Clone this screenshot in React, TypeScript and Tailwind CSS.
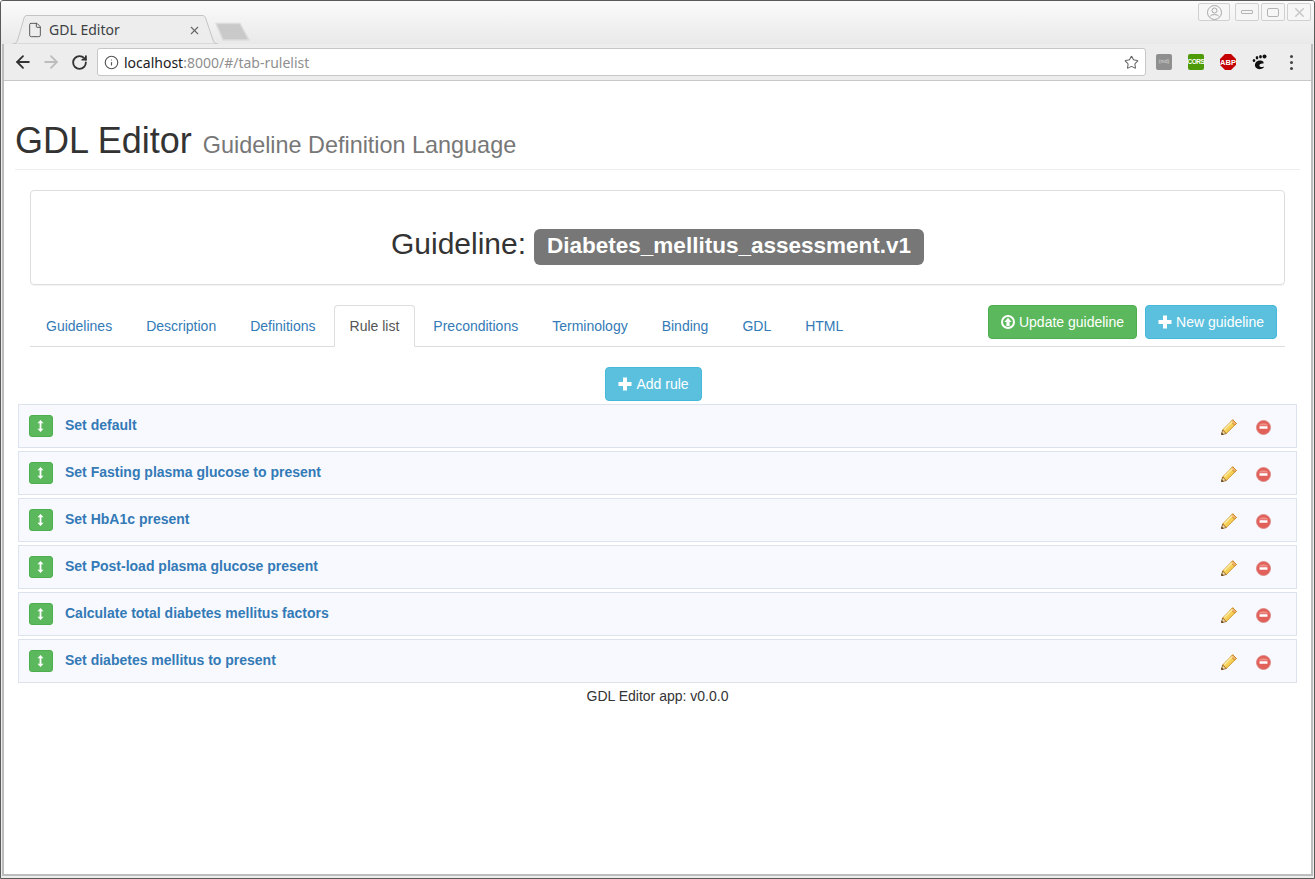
import { ArrowLeft, ArrowRight, RotateCw, Info, Star, File, X } from "lucide-react";

const rules = [
  "Set default",
  "Set Fasting plasma glucose to present",
  "Set HbA1c present",
  "Set Post-load plasma glucose present",
  "Calculate total diabetes mellitus factors",
  "Set diabetes mellitus to present",
];

const tabs = ["Guidelines", "Description", "Definitions", "Rule list", "Preconditions", "Terminology", "Binding", "GDL", "HTML"];

const PlusIcon = () => (
  <svg width="14" height="14" viewBox="0 0 14 14" className="shrink-0">
    <path d="M5 0.5h4v4.5h4.5v4H9v4.5H5V9H0.5V5H5z" fill="#fff" />
  </svg>
);

const UploadIcon = () => (
  <svg width="14" height="14" viewBox="0 0 14 14" className="shrink-0">
    <path
      fillRule="evenodd"
      d="M7 0a7 7 0 1 1 0 14A7 7 0 0 1 7 0zm0 2a5 5 0 1 0 0 10A5 5 0 0 0 7 2zm0 .8L10.6 7H8.6v4H5.4V7H3.4z"
      fill="#fff"
    />
  </svg>
);

const ResizeIcon = () => (
  <svg width="7" height="12" viewBox="0 0 7 12">
    <path d="M3.500 0l3 3.200H4.400v5.600h2.100L3.500 12 .5 8.800h2.100V3.200H.5z" fill="#fff" />
  </svg>
);

const PencilIcon = () => (
  <svg width="16" height="16" viewBox="0 0 16 16">
    <path d="M11.800 0.800l3.600 3.600L5.200 14.600l-3.600-3.600z" fill="#f6cf57" stroke="#c98a1b" strokeWidth="0.9" />
    <path d="M11.800 0.800l3.600 3.600-1.800 1.800L10 2.600z" fill="#f3b27a" stroke="#c98a1b" strokeWidth="0.9" />
    <path d="M1.600 11l3.600 3.600L0.600 15.600z" fill="#f7e2b5" stroke="#8a5a18" strokeWidth="0.8" />
    <path d="M0.500 13.300l2.200 2.200-2.400.5z" fill="#5b3a10" />
    <path d="M3.400 10.600l8-8" stroke="#fdeea8" strokeWidth="1.400" />
  </svg>
);

const RemoveIcon = () => (
  <svg width="15" height="15" viewBox="0 0 15 15">
    <circle cx="7.500" cy="7.500" r="7" fill="#e2605a" stroke="#d9847f" strokeWidth="0.8" />
    <path d="M2.500 5.500a5.500 4 0 0 1 10 0z" fill="#ee8f88" />
    <rect x="3.500" y="6.200" width="8" height="2.600" rx="0.600" fill="#fff" />
  </svg>
);

const WinButton = ({ w, children }: { w: string; children: React.ReactNode }) => (
  <div className={`${w} h-[18px] flex items-center justify-center border border-[#d0d0d0] rounded-[2px] bg-[#f6f6f6]`}>
    {children}
  </div>
);

const App = () => {
  return (
    <div className="w-[1315px] h-[879px] overflow-hidden flex flex-col bg-[#ededed] border border-[#5a5a5a] rounded-t-[3px] font-['Liberation_Sans',sans-serif] text-[14px] text-[#333]">
      {/* tab strip */}
      <div className="relative h-[43px] shrink-0 flex bg-gradient-to-b from-[#fbfbfb] to-[#e9e9e9]">
        <div className="relative ml-[11px] mt-[14px] w-[206px] h-[29px] flex items-center">
          <svg width="206" height="29" viewBox="0 0 206 29" className="absolute inset-0">
            <path d="M0.500 29 C4 29 5 27 6 24 L12 3 C12.600 1 13.500 0.500 15 0.500 L190 0.500 C192 0.500 193 1 193.600 3 L201 25 C202 28 203.500 29 206 29 Z" fill="#ededed" stroke="#c4c4c4" />
          </svg>
          <File size={16} strokeWidth={1.3} className="relative ml-[15px] text-[#444]" />
          <span className="relative ml-[6px] font-['Noto_Sans',sans-serif] text-[14px] text-[#3c4043]">GDL Editor</span>
          <X size={13} strokeWidth={2} className="absolute left-[176px] top-[9px] text-[#666]" />
        </div>
        <svg width="36" height="20" viewBox="0 0 36 20" className="ml-[-3px] mt-[21px]">
          <path d="M1 1.500h24l9 16.500H8z" fill="#c9c9c9" stroke="#dcdcdc" strokeWidth="1.500" strokeLinejoin="round" />
        </svg>
        {/* window buttons */}
        <div className="absolute right-[3px] top-[2px] flex gap-[2px]">
          <WinButton w="w-[32px] mr-[3px]">
            <svg width="15" height="15" viewBox="0 0 15 15" fill="none" stroke="#a8a8a8">
              <circle cx="7.500" cy="7.500" r="7" />
              <circle cx="7.500" cy="5.500" r="2.500" />
              <path d="M3 11.500c1-2.500 8-2.500 9 0" />
            </svg>
          </WinButton>
          <WinButton w="w-[24px]">
            <div className="w-[12px] h-[4px] rounded-[1px] border border-[#b4b4b4]" />
          </WinButton>
          <WinButton w="w-[24px]">
            <div className="w-[12px] h-[9px] rounded-[2px] border border-[#b4b4b4]" />
          </WinButton>
          <WinButton w="w-[24px]">
            <X size={15} strokeWidth={2.4} className="text-[#c8c8c8]" />
          </WinButton>
        </div>
      </div>

      <div className="flex-1 mx-[1px] mb-[2px] min-h-0 flex flex-col border-x-2 border-b-2 border-[#bdbdbd]">
        {/* toolbar */}
        <div className="h-[37px] shrink-0 flex items-center bg-[#ededed] border-b border-[#c8c8c8] pl-[9px]">
          <ArrowLeft size={20} strokeWidth={2.2} className="text-[#333]" />
          <ArrowRight size={20} strokeWidth={2.2} className="ml-[8px] text-[#bdbdbd]" />
          <RotateCw size={17} strokeWidth={2.6} className="ml-[10px] text-[#333]" />
          <div className="ml-[9px] w-[1049px] h-[28px] flex items-center bg-white border border-[#c6c6c6] rounded-[3px] pl-[6px]">
            <Info size={15} strokeWidth={1.8} className="text-[#555]" />
            <span className="ml-[5px] font-['Noto_Sans',sans-serif] text-[14px] text-[#202020]">
              localhost<span className="text-[#8f8f8f]">:8000/#/tab-rulelist</span>
            </span>
            <Star size={15} strokeWidth={1.7} className="ml-auto mr-[6px] text-[#666]" />
          </div>
          <div className="ml-[10px] w-[16px] h-[16px] rounded-[2px] bg-[#8f8f8f] flex items-center justify-center text-[5px] text-[#ddd]">(md)</div>
          <div className="ml-[16px] w-[16px] h-[16px] rounded-[2px] bg-[#4f9a07] flex items-center justify-center text-[6.500px] tracking-[-0.5px] font-bold text-white">CORS</div>
          <svg width="16" height="16" viewBox="0 0 16 16" className="ml-[16px]">
            <path d="M5 0h6l5 5v6l-5 5H5l-5-5V5z" fill="#c40000" />
            <text x="8" y="11" textAnchor="middle" fontSize="7.500" fontWeight="700" fill="#fff" fontFamily="Liberation Sans">ABP</text>
          </svg>
          <svg width="16" height="16" viewBox="0 0 16 16" className="ml-[16px]">
            <path d="M9 6.500C5 6 2.500 8.500 3 12c.4 2.500 3.500 3.500 6 3 2-.4 3-1.500 3-2.500-1.500.8-4 1-4.500-.5C7 10 9.500 9.500 11.500 9.500 12 8 11 6.800 9 6.500z" fill="#111" />
            <ellipse cx="2" cy="6.500" rx="1.300" ry="1.500" fill="#111" />
            <ellipse cx="5" cy="3.800" rx="1.300" ry="1.800" fill="#111" />
            <ellipse cx="8.500" cy="2.800" rx="1.400" ry="1.800" fill="#111" />
            <ellipse cx="12.500" cy="2.500" rx="2" ry="2" fill="#111" />
          </svg>
          <div className="ml-[22px] flex flex-col gap-[3px]">
            <div className="w-[3px] h-[3px] bg-[#444] rounded-full" />
            <div className="w-[3px] h-[3px] bg-[#444] rounded-full" />
            <div className="w-[3px] h-[3px] bg-[#444] rounded-full" />
          </div>
        </div>

        {/* page */}
        <div className="flex-1 min-h-0 bg-white">
          <div className="mx-[11px] w-[1285px] h-[89px] flex items-end pb-[4px] border-b border-[#eee] whitespace-nowrap">
            <h1 className="text-[36px] leading-[40px] text-[#333]">
              GDL Editor <small className="ml-[1px] text-[23.400px] text-[#777]">Guideline Definition Language</small>
            </h1>
          </div>

          <div className="mt-[20px] ml-[26px] w-[1255px] h-[95px] pt-[15px] flex items-center justify-center gap-[8px] border border-[#ddd] rounded-[4px] shadow-[0_1px_1px_rgba(0,0,0,0.05)]">
            <span className="mb-[4px] text-[30px] leading-[33px] text-[#333]">Guideline:</span>
            <span className="mt-[3px] h-[36px] px-[13px] pb-[2px] flex items-center rounded-[6px] bg-[#777] text-[22.500px] font-bold text-white">
              Diabetes_mellitus_assessment.v1
            </span>
          </div>

          <div className="mt-[20px] ml-[26px] w-[1255px] h-[42px] flex border-b border-[#ddd]">
            {tabs.map((t) =>
              t === "Rule list" ? (
                <div key={t} className="h-[42px] mr-[2px] px-[15px] flex items-center border border-[#ddd] border-b-white rounded-t-[4px] bg-white text-[#555]">
                  {t}
                </div>
              ) : (
                <div key={t} className="h-[42px] mr-[2px] px-[16px] flex items-center text-[#337ab7]">
                  {t}
                </div>
              )
            )}
            <div className="ml-auto mr-[8px] flex gap-[8px] items-start">
              <div className="h-[34px] px-[12px] flex items-center gap-[4px] rounded-[4px] bg-[#5cb85c] border border-[#4cae4c] text-white">
                <UploadIcon />
                Update guideline
              </div>
              <div className="h-[34px] px-[12px] flex items-center gap-[4px] rounded-[4px] bg-[#5bc0de] border border-[#46b8da] text-white">
                <PlusIcon />
                New guideline
              </div>
            </div>
          </div>

          <div className="mt-[20px] flex justify-center pr-[8px]">
            <div className="h-[34px] px-[12px] flex items-center gap-[4px] rounded-[4px] bg-[#5bc0de] border border-[#46b8da] text-white">
              <PlusIcon />
              Add rule
            </div>
          </div>

          <div className="mt-[3px] ml-[14px] w-[1279px] flex flex-col gap-[3px]">
            {rules.map((r) => (
              <div key={r} className="h-[44px] flex items-center bg-[#f8f9fe] border border-[#dde3ec] pl-[10px]">
                <div className="w-[24px] h-[22px] mt-[-1px] pr-[1px] flex items-center justify-center rounded-[3px] bg-[#5cb85c] border border-[#4cae4c]">
                  <ResizeIcon />
                </div>
                <span className="ml-[12px] mt-[-2px] font-bold text-[#337ab7]">{r}</span>
                <div className="ml-auto mr-[25px] mt-[2px] flex items-center gap-[19px]">
                  <PencilIcon />
                  <RemoveIcon />
                </div>
              </div>
            ))}
          </div>

          <p className="mt-[3px] text-center leading-[20px] text-[#333]">GDL Editor app: v0.0.0</p>
        </div>
      </div>
    </div>
  );
};

export default App;
